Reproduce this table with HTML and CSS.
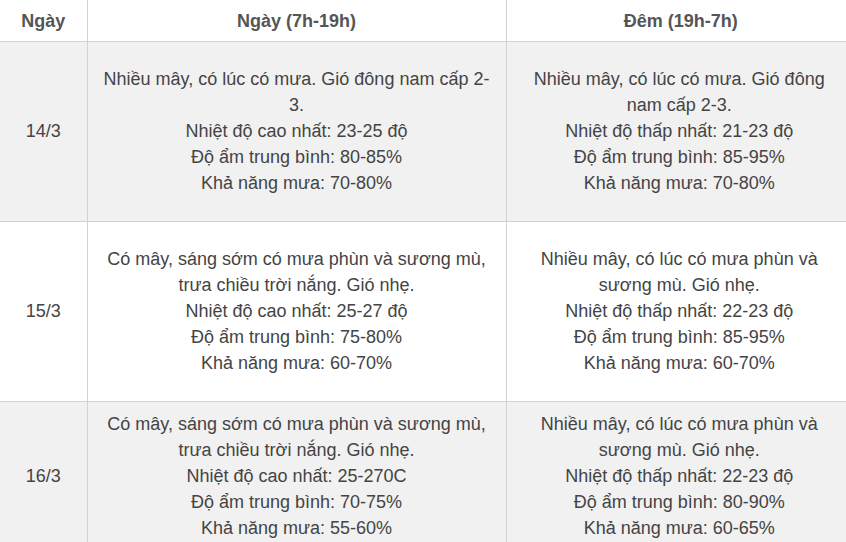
FILE: index.html
```html
<!DOCTYPE html>
<html lang="vi">
<head>
<meta charset="utf-8">
<link rel="stylesheet" href="styles.css">
</head>
<body>
<table class="weather">
  <colgroup>
    <col class="c-day">
    <col class="c-light">
    <col class="c-night">
  </colgroup>
  <thead>
    <tr>
      <th>Ngày</th>
      <th>Ngày (7h-19h)</th>
      <th>Đêm (19h-7h)</th>
    </tr>
  </thead>
  <tbody>
    <tr class="odd">
      <td>14/3</td>
      <td>Nhiều mây, có lúc có mưa. Gió đông nam cấp 2-3.<br>Nhiệt độ cao nhất: 23-25 độ<br>Độ ẩm trung bình: 80-85%<br>Khả năng mưa: 70-80%</td>
      <td>Nhiều mây, có lúc có mưa. Gió đông nam cấp 2-3.<br>Nhiệt độ thấp nhất: 21-23 độ<br>Độ ẩm trung bình: 85-95%<br>Khả năng mưa: 70-80%</td>
    </tr>
    <tr>
      <td>15/3</td>
      <td>Có mây, sáng sớm có mưa phùn và sương mù, trưa chiều trời nắng. Gió nhẹ.<br>Nhiệt độ cao nhất: 25-27 độ<br>Độ ẩm trung bình: 75-80%<br>Khả năng mưa: 60-70%</td>
      <td>Nhiều mây, có lúc có mưa phùn và sương mù. Gió nhẹ.<br>Nhiệt độ thấp nhất: 22-23 độ<br>Độ ẩm trung bình: 85-95%<br>Khả năng mưa: 60-70%</td>
    </tr>
    <tr class="odd last">
      <td>16/3</td>
      <td>Có mây, sáng sớm có mưa phùn và sương mù, trưa chiều trời nắng. Gió nhẹ.<br>Nhiệt độ cao nhất: 25-270C<br>Độ ẩm trung bình: 70-75%<br>Khả năng mưa: 55-60%</td>
      <td>Nhiều mây, có lúc có mưa phùn và sương mù. Gió nhẹ.<br>Nhiệt độ thấp nhất: 22-23 độ<br>Độ ẩm trung bình: 80-90%<br>Khả năng mưa: 60-65%</td>
    </tr>
  </tbody>
</table>
</body>
</html>
```

FILE: styles.css
```css
html, body {
  margin: 0;
  padding: 0;
  background: #ffffff;
}

.weather {
  width: 846px;
  border-collapse: collapse;
  table-layout: fixed;
  font-family: "Liberation Sans", Arial, sans-serif;
  font-size: 18px;
  line-height: 26px;
  color: #444444;
}

.c-day { width: 87px; }
.c-light { width: 419px; }
.c-night { width: 340px; }

.weather th {
  height: 41px;
  padding: 0 12px;
  font-weight: bold;
  font-size: 18px;
  color: #555555;
  text-align: center;
  vertical-align: middle;
  border: 1px solid #d2d2d2;
  border-top: none;
}

.weather td {
  height: 130px;
  padding: 24px 15px 25px;
  text-align: center;
  vertical-align: middle;
  border: 1px solid #d2d2d2;
}

.weather th:last-child,
.weather td:last-child {
  padding-left: 21px;
}

.weather tr th:first-child,
.weather tr td:first-child { border-left: none; }
.weather tr th:last-child,
.weather tr td:last-child { border-right: none; }

.weather tr.odd td { background: #f1f1f1; }

.weather tr.last td {
  padding-top: 9px;
  padding-bottom: 9px;
}
```
